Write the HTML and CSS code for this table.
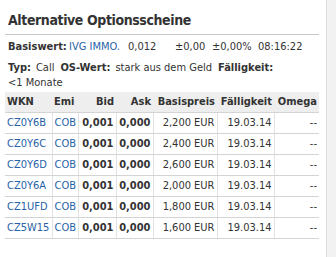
FILE: index.html
```html
<!DOCTYPE html>
<html lang="de">
<head>
<meta charset="utf-8">
<title>Alternative Optionsscheine</title>
<link rel="stylesheet" href="styles.css">
</head>
<body>
<div class="page">
  <div class="panel">
    <h2 class="title">Alternative Optionsscheine</h2>
    <div class="quote">
      <b>Basiswert:</b>
      <a class="link">IVG IMMO.</a>
      <span>0,012</span>
      <span>±0,00</span>
      <span>±0,00%</span>
      <span>08:16:22</span>
    </div>
    <div class="meta">
      <div class="meta-row">
        <b class="key">Typ:</b><span class="val">Call</span><b class="key">OS-Wert:</b><span class="val">stark aus dem Geld</span><b class="key">Fälligkeit:</b>
      </div>
      <div class="meta-row">&lt;1 Monate</div>
    </div>
    <table class="grid">
      <colgroup>
        <col class="c-wkn"><col class="c-emi"><col class="c-bid"><col class="c-ask"><col class="c-basis"><col class="c-fall"><col class="c-omega">
      </colgroup>
      <thead>
        <tr><th class="l">WKN</th><th class="l">Emi</th><th>Bid</th><th>Ask</th><th>Basispreis</th><th>Fälligkeit</th><th>Omega</th></tr>
      </thead>
      <tbody>
        <tr><td class="l link">CZ0Y6B</td><td class="l link">COB</td><td class="b">0,001</td><td class="b">0,000</td><td>2,200 EUR</td><td>19.03.14</td><td>--</td></tr>
        <tr><td class="l link">CZ0Y6C</td><td class="l link">COB</td><td class="b">0,001</td><td class="b">0,000</td><td>2,400 EUR</td><td>19.03.14</td><td>--</td></tr>
        <tr><td class="l link">CZ0Y6D</td><td class="l link">COB</td><td class="b">0,001</td><td class="b">0,000</td><td>2,600 EUR</td><td>19.03.14</td><td>--</td></tr>
        <tr><td class="l link">CZ0Y6A</td><td class="l link">COB</td><td class="b">0,001</td><td class="b">0,000</td><td>2,000 EUR</td><td>19.03.14</td><td>--</td></tr>
        <tr><td class="l link">CZ1UFD</td><td class="l link">COB</td><td class="b">0,001</td><td class="b">0,000</td><td>1,800 EUR</td><td>19.03.14</td><td>--</td></tr>
        <tr><td class="l link">CZ5W15</td><td class="l link">COB</td><td class="b">0,001</td><td class="b">0,000</td><td>1,600 EUR</td><td>19.03.14</td><td>--</td></tr>
      </tbody>
    </table>
  </div>
  <div class="side"></div>
</div>
</body>
</html>
```
FILE: styles.css
```css
* { box-sizing: border-box; }
html, body { margin: 0; padding: 0; }
body {
  font-family: "DejaVu Sans Condensed", "DejaVu Sans", sans-serif;
  font-stretch: condensed;
  font-size: 11px;
  color: #333;
  background: #fff;
}
.page { display: flex; height: 257px; }
.panel {
  width: 327px;
  padding: 0 7px 0 5px;
  border-right: 1px solid #dedede;
  background: #fff;
}
.side { flex: 1; background: #f2f2f2; }
.title {
  margin: 0;
  padding: 10px 3px 4px;
  font-size: 14px;
  line-height: 20px;
  font-weight: bold;
  letter-spacing: -0.4px;
  color: #333;
  border-bottom: 1px solid #c8c8c8;
}
.quote {
  display: grid;
  grid-template-columns: 61px 59px 47px 37px 46px auto;
  margin-top: 4px;
  padding-left: 3px;
  line-height: 15px;
}
.link { color: #2762a8; }
.meta { margin-top: 6px; padding-left: 3px; line-height: 15px; }
.meta-row { display: flex; white-space: nowrap; }
.meta .key { margin-right: 5px; }
.meta .val { margin-right: 6px; }
.grid {
  border-collapse: collapse;
  width: 314px;
  table-layout: fixed;
  margin-top: 2px;
}
.c-wkn { width: 47px; }
.c-emi { width: 26px; }
.c-bid { width: 38px; }
.c-ask { width: 37px; }
.c-basis { width: 64px; }
.c-fall { width: 57px; }
.c-omega { width: 45px; }
.grid th {
  background: #eeeeee;
  height: 20px;
  padding: 0 2px;
  font-weight: bold;
  text-align: right;
  white-space: nowrap;
  border-bottom: 1px solid #d4d4d4;
}
.grid td {
  height: 21px;
  padding: 0 2px;
  text-align: right;
  white-space: nowrap;
  border-bottom: 1px solid #d4d4d4;
  border-left: 1px solid #e2e2e2;
}
.grid td:first-child { border-left: none; }
.grid .l { text-align: left; }
.grid .b { font-weight: bold; }
```
